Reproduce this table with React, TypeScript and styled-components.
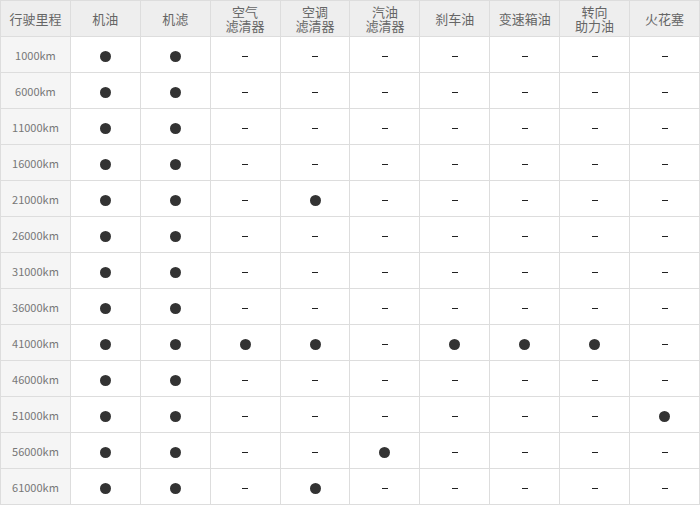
import React from 'react';
import styled, { createGlobalStyle } from 'styled-components';

const GlobalStyle = createGlobalStyle`
  html, body {
    margin: 0;
    padding: 0;
    background: #ffffff;
  }
  body {
    font-family: "Noto Sans CJK SC", "Noto Sans", sans-serif;
  }
`;

const Table = styled.table`
  width: 700px;
  border-collapse: collapse;
  table-layout: fixed;
  color: #555;
`;

const HeadCell = styled.th`
  height: 35px;
  padding: 0;
  border: 1px solid #dddddd;
  background: #eeeeee;
  font-weight: normal;
  font-size: 13px;
  line-height: 14px;
  text-align: center;
  vertical-align: middle;
  color: #666;
`;

const Row = styled.tr`
  height: 36px;
`;

const Cell = styled.td<{ $first?: boolean }>`
  padding: 0;
  border: 1px solid #dddddd;
  background: ${(p) => (p.$first ? '#f5f5f5' : '#ffffff')};
  text-align: center;
  vertical-align: middle;
  font-size: 11px;
  color: #777;
`;

const Dot = styled.span`
  display: inline-block;
  width: 11px;
  height: 11px;
  border-radius: 50%;
  background: #333333;
  vertical-align: middle;
`;

const Dash = styled.span`
  display: inline-block;
  width: 6px;
  height: 1px;
  background: #222222;
  vertical-align: middle;
`;

const headers = [
  ['行驶里程'],
  ['机油'],
  ['机滤'],
  ['空气', '滤清器'],
  ['空调', '滤清器'],
  ['汽油', '滤清器'],
  ['刹车油'],
  ['变速箱油'],
  ['转向', '助力油'],
  ['火花塞'],
];

const kms = [1000, 6000, 11000, 16000, 21000, 26000, 31000, 36000, 41000, 46000, 51000, 56000, 61000];

// columns after 机油/机滤: which mileages get a dot
const marks: Record<number, number[]> = {
  3: [41000],
  4: [21000, 41000, 61000],
  5: [56000],
  6: [41000],
  7: [41000],
  8: [41000],
  9: [51000],
};

export default function App() {
  return (
    <>
      <GlobalStyle />
      <Table>
        <thead>
          <tr>
            {headers.map((h, i) => (
              <HeadCell key={i}>
                {h.map((line, j) => (
                  <React.Fragment key={j}>
                    {j > 0 && <br />}
                    {line}
                  </React.Fragment>
                ))}
              </HeadCell>
            ))}
          </tr>
        </thead>
        <tbody>
          {kms.map((km) => (
            <Row key={km}>
              <Cell $first>{km}km</Cell>
              {headers.slice(1).map((_, idx) => {
                const col = idx + 1;
                const on = col <= 2 || (marks[col] || []).includes(km);
                return <Cell key={col}>{on ? <Dot /> : <Dash />}</Cell>;
              })}
            </Row>
          ))}
        </tbody>
      </Table>
    </>
  );
}
